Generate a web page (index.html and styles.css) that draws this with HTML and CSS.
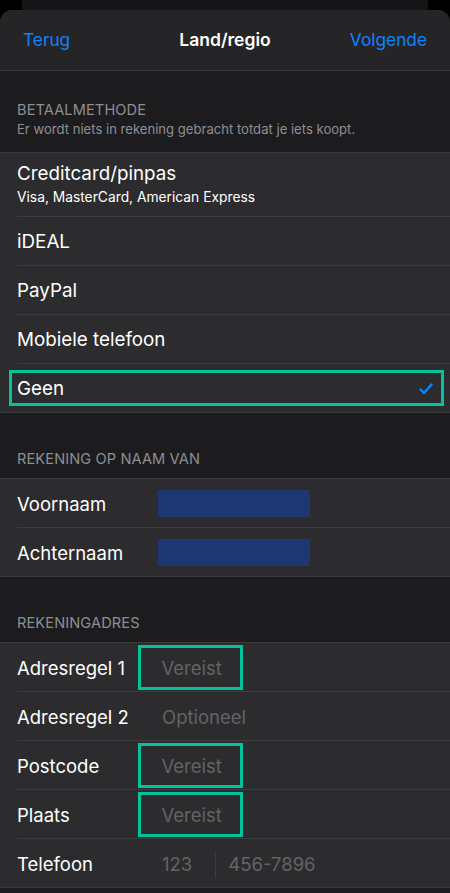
FILE: index.html
```html
<!DOCTYPE html>
<html lang="nl">
<head>
<meta charset="utf-8">
<title>Land/regio</title>
<link rel="stylesheet" href="styles.css">
</head>
<body>
<div class="backcard"></div>
<div class="sheet">
  <header class="nav">
    <span class="nav-btn">Terug</span>
    <span class="nav-title">Land/regio</span>
    <span class="nav-btn right">Volgende</span>
  </header>

  <div class="section-head first">
    <div class="head-title">BETAALMETHODE</div>
    <div class="head-sub">Er wordt niets in rekening gebracht totdat je iets koopt.</div>
  </div>
  <div class="group">
    <div class="row two-line">
      <div class="label">Creditcard/pinpas</div>
      <div class="sublabel">Visa, MasterCard, American Express</div>
    </div>
    <div class="row"><div class="label">iDEAL</div></div>
    <div class="row"><div class="label">PayPal</div></div>
    <div class="row"><div class="label">Mobiele telefoon</div></div>
    <div class="row selected last">
      <div class="label">Geen</div>
      <svg class="check" width="14" height="12" viewBox="0 0 14 12"><path d="M1.5 6.5 L5 10 L12.5 1.5" fill="none" stroke="#0a84ff" stroke-width="2.4" stroke-linecap="round" stroke-linejoin="round"/></svg>
      <div class="highlight"></div>
    </div>
  </div>

  <div class="section-head">
    <div class="head-title">REKENING OP NAAM VAN</div>
  </div>
  <div class="group">
    <div class="row field"><div class="flabel">Voornaam</div><div class="redact"></div></div>
    <div class="row field last"><div class="flabel">Achternaam</div><div class="redact"></div></div>
  </div>

  <div class="section-head">
    <div class="head-title">REKENINGADRES</div>
  </div>
  <div class="group">
    <div class="row field"><div class="flabel">Adresregel 1</div><div class="value boxed">Vereist</div></div>
    <div class="row field"><div class="flabel">Adresregel 2</div><div class="value">Optioneel</div></div>
    <div class="row field"><div class="flabel">Postcode</div><div class="value boxed">Vereist</div></div>
    <div class="row field"><div class="flabel">Plaats</div><div class="value boxed">Vereist</div></div>
    <div class="row field last"><div class="flabel">Telefoon</div><div class="value phone"><span class="area">123</span><span class="divider"></span><span class="num">456-7896</span></div></div>
  </div>
</div>
</body>
</html>
```
FILE: styles.css
```css
* { box-sizing: border-box; }
html, body { margin: 0; padding: 0; }
body {
  width: 450px;
  height: 893px;
  overflow: hidden;
  background: #000;
  font-family: "Inter", "Roboto", "Liberation Sans", sans-serif;
  color: #fff;
}
.backcard {
  height: 10px;
  margin: 0 22px;
  background: #151517;
}
.sheet {
  background: #1c1c1e;
  border-radius: 12px 12px 0 0;
  overflow: hidden;
  min-height: 883px;
}
.nav {
  height: 61px;
  background: #252527;
  border-bottom: 1px solid #38383a;
  display: grid;
  grid-template-columns: 1fr auto 1fr;
  align-items: center;
  padding: 0 23px 2px 23px;
}
.nav-btn {
  color: #0a84ff;
  font-size: 17.3px;
}
.nav-btn.right { text-align: right; }
.nav-title {
  font-size: 17.5px;
  font-weight: 600;
  color: #fff;
}
.section-head {
  height: 66px;
  padding: 0 17px 10px;
  display: flex;
  flex-direction: column;
  justify-content: flex-end;
  color: #8e8e93;
  border-bottom: 1px solid #3a3a3c;
}
.section-head.first {
  height: 82px;
  padding-bottom: 13px;
}
.head-title {
  font-size: 14.6px;
  letter-spacing: 0.1px;
  line-height: 18px;
}
.head-sub {
  font-size: 13.1px;
  line-height: 19px;
  margin-top: 1px;
}
.group {
  background: #2c2c2e;
  border-bottom: 1px solid #3a3a3c;
}
.row {
  position: relative;
  height: 49px;
  margin-left: 17px;
  padding-top: 2px;
  border-bottom: 1px solid #3d3d40;
  display: flex;
  align-items: center;
}
.row.last { border-bottom: none; height: 48px; }
.row.two-line {
  height: 64px;
  flex-direction: column;
  align-items: flex-start;
  justify-content: center;
  padding-top: 0;
  padding-bottom: 1px;
}
.label {
  font-size: 18.8px;
  line-height: 24px;
}
.sublabel {
  font-size: 13.8px;
  line-height: 19px;
  margin-top: 2px;
}
.selected { padding-right: 17px; justify-content: space-between; }
.check { margin-top: -1px; }
.highlight {
  position: absolute;
  left: -8px;
  right: 6px;
  top: 6px;
  bottom: 6px;
  border: 3.5px solid #04c39a;
}
.field { padding-top: 0; }
.flabel {
  width: 121px;
  flex: none;
  font-size: 18.5px;
  padding-top: 2px;
}
.redact {
  margin-left: 20px;
  width: 152px;
  height: 27px;
  background: #1d3870;
}
.value {
  height: 45px;
  width: 105px;
  padding-left: 24px;
  padding-top: 2px;
  display: flex;
  align-items: center;
  color: #636366;
  font-size: 18.5px;
  white-space: nowrap;
}
.value.boxed {
  border: 3.5px solid #04c39a;
  padding-left: 20.5px;
}
.value.phone { width: auto; }
.divider {
  width: 1px;
  height: 27px;
  background: #3d3d40;
  margin: 0 12px 0 23px;
}
```
